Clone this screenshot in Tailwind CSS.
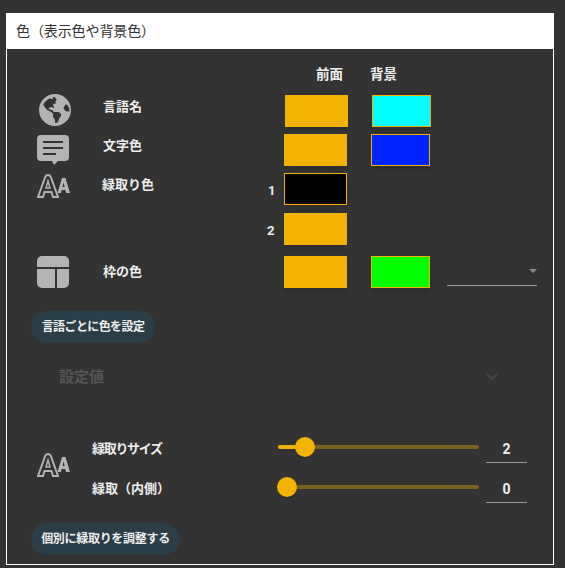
<!DOCTYPE html>
<html lang="ja">
<head>
    <meta charset="UTF-8">
    <title>色</title>
    <script src="https://cdn.jsdelivr.net/npm/@tailwindcss/browser@4"></script>
</head>
<body class="bg-[#333333] h-[568px] w-[565px] overflow-hidden font-['Roboto','Noto_Sans_CJK_JP',sans-serif] text-[13px] font-bold text-[#eeeeee]">
    <div class="ml-[6px] pt-[13px] w-[548px]">
        <div class="w-full h-[552px] border border-white bg-[#333333] flex flex-col">
            <!-- Header -->
            <div class="bg-white text-[#333333] text-[14px] font-normal tracking-[-0.1px] h-[36px] flex items-center pl-[9px] shrink-0 -mt-px">色（表示色や背景色）</div>

            <!-- Column titles -->
            <div class="flex h-[27px] mt-[12px] text-[13.500px] leading-[27px]">
                <span class="ml-[309px] w-[54px]">前面</span>
                <span>背景</span>
            </div>

            <!-- Language name -->
            <div class="flex h-[32px] mt-[7px]">
                <div class="w-[30px] ml-[32px] mt-[-2px]">
                    <svg viewBox="0 0 496 512" class="w-[32px] h-[34px] fill-[#b3b3b3]"><path fill-rule="evenodd" d="M248 8C111.03 8 0 119.03 0 256s111.03 248 248 248 248-111.03 248-248S384.97 8 248 8zm82.29 357.6c-3.9 3.88-7.99 7.95-11.31 11.28-2.99 3-5.1 6.7-6.17 10.71-1.51 5.66-2.73 11.38-4.77 16.87l-17.39 46.85c-13.76 3-28 4.69-42.65 4.69v-27.38c1.69-12.62-7.64-36.26-22.63-51.25-6-6-9.37-14.14-9.37-22.63v-32.01c0-11.64-6.27-22.34-16.46-27.97-14.37-7.95-34.81-19.06-48.81-26.11-11.48-5.78-22.1-13.14-31.65-21.75l-.8-.72a114.792 114.792 0 0 1-18.06-20.74c-9.38-13.77-24.66-36.42-34.59-51.14 20.47-45.5 57.36-82.04 103.2-101.89l24.01 12.01C203.48 89.74 216 82.01 216 70.11v-11.3c7.99-1.29 16.12-2.11 24.45-2.42l28.3 28.3c6.25 6.25 6.25 16.38 0 22.63L264 112l-10.34 10.34c-3.12 3.12-3.12 8.19 0 11.31l4.69 4.69c3.12 3.12 3.12 8.19 0 11.31l-8 8a8.008 8.008 0 0 1-5.66 2.34h-8.99c-2.08 0-4.08.81-5.58 2.27l-9.92 9.65a8.008 8.008 0 0 0-1.58 9.31l15.59 31.19c2.66 5.32-1.21 11.58-7.15 11.58h-5.64c-1.93 0-3.79-.7-5.24-1.96l-9.28-8.06a16.017 16.017 0 0 0-15.55-3.1l-31.17 10.39a11.95 11.95 0 0 0-8.17 11.34c0 4.53 2.56 8.66 6.61 10.69l11.08 5.54c9.41 4.71 19.79 7.16 30.31 7.16s22.59 27.29 32 32h66.75c8.49 0 16.62 3.37 22.63 9.37l13.69 13.69a30.503 30.503 0 0 1 8.93 21.57 46.536 46.536 0 0 1-13.72 32.98zM417 274.25c-5.79-1.45-10.84-5-14.15-9.97l-17.98-26.97a23.97 23.97 0 0 1 0-26.62l19.59-29.38c2.32-3.47 5.5-6.29 9.24-8.15l12.98-6.49C458.91 197.47 472 228.22 472 256c0 8.26-.7 16.34-1.71 24.32L417 274.25z"/></svg>
                </div>
                <span class="ml-[34px] w-[182px] leading-[24px]">言語名</span>
                <div class="w-[63px] h-[32px] bg-[#f1b300] shadow-md"></div>
                <div class="ml-[24px] w-[59px] h-[32px] bg-[#00ffff] border border-[#f1b300] shadow-md"></div>
            </div>

            <!-- Text colour -->
            <div class="flex h-[32px] mt-[7px]">
                <div class="w-[30px] ml-[30px] mt-[1px]">
                    <svg viewBox="0 0 32 30" class="w-[32px] h-[30px]"><path fill="#b3b3b3" d="M4 0h24a4 4 0 0 1 4 4v18a4 4 0 0 1-4 4h-7l-4 4-2-4H4a4 4 0 0 1-4-4V4a4 4 0 0 1 4-4z"/><path stroke="#333333" stroke-width="2" d="M6 7h20M6 13h20M6 19h13"/></svg>
                </div>
                <span class="ml-[36px] w-[181px] leading-[24px]">文字色</span>
                <div class="w-[63px] h-[32px] bg-[#f1b300] shadow-md"></div>
                <div class="ml-[24px] w-[59px] h-[32px] bg-[#0024ff] border border-[#f1b300] shadow-md"></div>
            </div>

            <!-- Outline colour -->
            <div class="flex h-[32px] mt-[7px]">
                <div class="w-[30px] ml-[30px]">
                    <svg viewBox="0 0 33 25" class="w-[33px] h-[25px] mt-[1px]" fill="none" stroke="#b3b3b3" stroke-width="2"><path d="M1 23 8 3.500Q9 1 11 1q2 0 3 2.500L21 23h-5l-1.500-5h-7L6 23z"/><path d="M9 14l2-7 2 7z" stroke-width="1.500"/><path fill="#b3b3b3" stroke="none" fill-rule="evenodd" d="M20.500 19 25 4h3.500L33 19h-4l-.7-3h-3.600l-.7 3zM25.500 13h2.200L26.600 8.500z"/></svg>
                </div>
                <span class="ml-[35px] w-[166px] leading-[24px]">緑取り色</span>
                <span class="w-[16px] leading-[36px] font-bold text-[13px]">1</span>
                <div class="w-[63px] h-[32px] bg-black border border-[#f1b300] shadow-md"></div>
            </div>
            <div class="flex h-[32px] mt-[8px]">
                <span class="ml-[260px] w-[17px] leading-[36px] font-bold text-[13px]">2</span>
                <div class="w-[63px] h-[32px] bg-[#f1b300] shadow-md"></div>
            </div>

            <!-- Border colour -->
            <div class="flex h-[32px] mt-[11px]">
                <div class="w-[32px] h-[32px] ml-[30px] rounded-[5px] bg-[#b3b3b3] flex flex-col overflow-hidden">
                    <div class="h-[11px] border-b-2 border-[#333333] box-content"></div>
                    <div class="ml-[18px] w-[2px] h-[19px] bg-[#333333]"></div>
                </div>
                <span class="ml-[34px] w-[181px] leading-[32px]">枠の色</span>
                <div class="w-[63px] h-[32px] bg-[#f1b300] shadow-md"></div>
                <div class="ml-[24px] w-[59px] h-[32px] bg-[#00ff00] border border-[#f1b300] shadow-md"></div>
                <div class="ml-[17px] w-[90px] h-[30px] border-b border-[#999999] flex justify-end items-center">
                    <div class="w-0 h-0 border-x-[4px] border-x-transparent border-t-[4px] border-t-[#8a8a8a]"></div>
                </div>
            </div>

            <!-- Per language button -->
            <div class="mt-[23px] ml-[24px] w-[124px] h-[32px] rounded-full bg-[#2b3d47] flex items-center justify-center text-[12px] tracking-[-0.6px]">言語ごとに色を設定</div>

            <!-- Disabled dropdown -->
            <div class="flex items-center h-[24px] mt-[22px] ml-[52px] text-[15px] font-bold text-[#555555]">
                <span class="w-[427px]">設定値</span>
                <svg viewBox="0 0 12 8" class="w-[12px] h-[8px]" fill="none" stroke="#4a4a4a" stroke-width="1.500"><path d="m1 1 5 5 5-5"/></svg>
            </div>

            <!-- Outline sliders -->
            <div class="flex mt-[46px]">
                <div class="ml-[30px] w-[55px] flex items-center">
                    <svg viewBox="0 0 33 25" class="w-[33px] h-[25px] mt-[-3px]" fill="none" stroke="#b3b3b3" stroke-width="2"><path d="M1 23 8 3.500Q9 1 11 1q2 0 3 2.500L21 23h-5l-1.500-5h-7L6 23z"/><path d="M9 14l2-7 2 7z" stroke-width="1.500"/><path fill="#b3b3b3" stroke="none" fill-rule="evenodd" d="M20.500 19 25 4h3.500L33 19h-4l-.7-3h-3.600l-.7 3zM25.500 13h2.200L26.600 8.500z"/></svg>
                </div>
                <div class="flex flex-col gap-[16px]">
                    <div class="flex items-center h-[24px]">
                        <span class="w-[186px] mt-[4px] tracking-[-1.300px]">緑取りサイズ</span>
                        <div class="relative w-[201px] h-[4px] rounded-full bg-[#7a6220]">
                            <div class="absolute left-0 top-0 w-[27px] h-[4px] rounded-full bg-[#f1b300]"></div>
                            <div class="absolute left-[17px] top-[-8px] w-[20px] h-[20px] rounded-full bg-[#f1b300] shadow-sm"></div>
                        </div>
                        <div class="ml-[7px] w-[41px] h-[26px] mt-[6px] border-b border-[#999999] text-center text-[14px] font-bold leading-[24px]">2</div>
                    </div>
                    <div class="flex items-center h-[24px]">
                        <span class="w-[186px] mt-[4px]">緑取（内側）</span>
                        <div class="relative w-[201px] h-[4px] rounded-full bg-[#7a6220]">
                            <div class="absolute left-[-1px] top-[-8px] w-[20px] h-[20px] rounded-full bg-[#f1b300] shadow-sm"></div>
                        </div>
                        <div class="ml-[7px] w-[41px] h-[26px] mt-[6px] border-b border-[#999999] text-center text-[14px] font-bold leading-[24px]">0</div>
                    </div>
                </div>
            </div>

            <div class="mt-[24px] ml-[24px] w-[149px] h-[32px] rounded-full bg-[#2b3d47] flex items-center justify-center text-[12px] tracking-[-0.3px]">個別に緑取りを調整する</div>
        </div>
    </div>
</body>
</html>
